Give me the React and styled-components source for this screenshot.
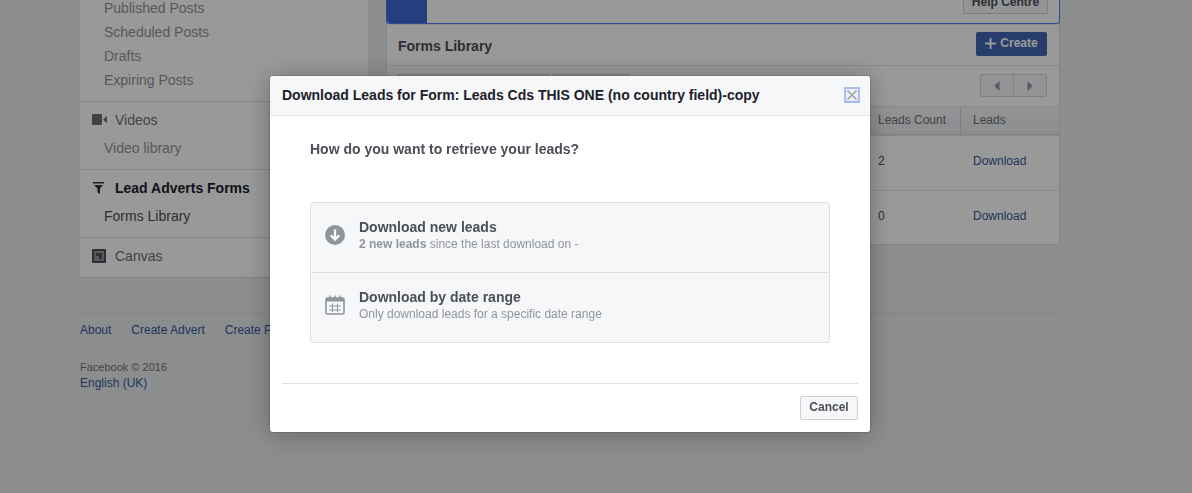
import React from "react";
import styled, { createGlobalStyle } from "styled-components";

const GlobalStyle = createGlobalStyle`
  html, body {
    margin: 0;
    height: 493px;
    overflow: hidden;
    background: #e9ebee;
    font-family: "Liberation Sans", Arial, sans-serif;
  }
  * { box-sizing: border-box; }
`;

const Page = styled.div`
  width: 980px;
  margin: -4px 0 0 80px;
`;

const Columns = styled.div`
  display: flex;
  align-items: flex-start;
  gap: 18px;
`;

const Sidebar = styled.nav`
  width: 288px;
  background: #fff;
  border-bottom: 1px solid #d3d6db;
`;

const Section = styled.div`
  padding-bottom: ${(p) => p.$pad || 9}px;
  border-bottom: ${(p) => (p.$last ? "none" : "1px solid #dddfe2")};
`;

const SectionHead = styled.div`
  display: flex;
  align-items: center;
  height: 34px;
  padding: 2px 0 0 12px;
  font-size: 14px;
  font-weight: ${(p) => (p.$active ? "bold" : "normal")};
  color: ${(p) => (p.$active ? "#1d2129" : "#6b6f76")};
  & > span { margin-left: ${(p) => p.$gap || 9}px; }
`;

const SideItem = styled.div`
  height: 24px;
  line-height: 24px;
  padding-left: 24px;
  font-size: 14px;
  color: ${(p) => (p.$active ? "#4b4f56" : "#90949c")};
`;

const Main = styled.main`
  width: 674px;
  display: flex;
  flex-direction: column;
  gap: 1px;
`;

const Banner = styled.div`
  height: 28px;
  display: flex;
  justify-content: space-between;
  background: #fff;
  border: 1px solid #5080f0;
  border-top: none;
  border-radius: 0 0 3px 3px;
`;

const BannerBlock = styled.div`
  width: 40px;
  background: #3b6ad0;
  border-radius: 0 0 0 3px;
`;

const HelpButton = styled.div`
  height: 18px;
  width: 85px;
  margin-right: 11px;
  background: #f6f7f9;
  border: 1px solid #ced0d4;
  font-size: 12px;
  font-weight: bold;
  line-height: 10px;
  text-align: center;
  color: #4b4f56;
  white-space: nowrap;
`;

const LibraryCard = styled.section`
  background: #fff;
  border: 1px solid #dddfe2;
  border-top: none;
`;

const CardHeader = styled.header`
  height: 41px;
  display: flex;
  align-items: center;
  justify-content: space-between;
  padding: 0 12px 0 11px;
  border-bottom: 1px solid #e5e5e5;
`;

const CardTitle = styled.h2`
  margin: 2px 0 0;
  font-size: 14px;
  font-weight: bold;
  color: #4b4f56;
`;

const CreateButton = styled.div`
  width: 71px;
  height: 24px;
  margin-top: -2px;
  padding-bottom: 2px;
  display: flex;
  align-items: center;
  justify-content: center;
  gap: 4px;
  background: #4267b2;
  border-radius: 2px;
  color: #fff;
  font-size: 12px;
  font-weight: bold;
`;

const Toolbar = styled.div`
  height: 40px;
  display: flex;
  align-items: flex-start;
  padding: 8px 12px 0 11px;
  gap: 3px;
`;

const GhostButton = styled.div`
  height: 24px;
  width: ${(p) => p.$w}px;
  background: #f6f7f9;
  border: 1px solid #ced0d4;
`;

const Pager = styled.div`
  margin-left: auto;
  display: flex;
  width: 67px;
  height: 23px;
  background: #f6f7f9;
  border: 1px solid #d3d6db;
  border-radius: 2px;
`;

const PagerCell = styled.div`
  flex: 1;
  display: flex;
  align-items: center;
  justify-content: center;
  & + & { border-left: 1px solid #d3d6db; }
`;

const TableRow = styled.div`
  display: grid;
  grid-template-columns: 1fr 82px 99px;
  align-items: center;
  height: ${(p) => p.$h}px;
  padding-bottom: ${(p) => p.$pad}px;
  font-size: 12px;
  color: #4b4f56;
  & + & { border-top: 1px solid #e5e6e9; }
`;

const HeadRow = styled(TableRow)`
  background: linear-gradient(#f6f7f9, #e9ebee);
  border-top: 1px solid #e5e6e9;
  border-bottom: 1px solid #d3d6db;
`;

const HeadCell = styled.div`
  height: 100%;
  display: flex;
  align-items: center;
  padding-bottom: 2px;
  color: #6b6f76;
  padding-left: ${(p) => (p.$divided ? 12 : 0)}px;
  border-left: ${(p) => (p.$divided ? "1px solid #d3d6db" : "none")};
`;

const LinkCell = styled.a`
  padding-left: 13px;
  color: #365899;
`;

const Footer = styled.footer`
  margin-top: 35px;
  border-top: 1px solid #dddfe2;
  padding-top: 9px;
`;

const FooterLinks = styled.div`
  display: flex;
  gap: 20px;
  font-size: 12px;
  line-height: 14px;
  color: #365899;
  margin-bottom: 22px;
`;

const Copyright = styled.div`
  font-size: 11px;
  line-height: 16px;
  color: #737373;
`;

const Language = styled.div`
  font-size: 12px;
  line-height: 16px;
  color: #365899;
`;

const Overlay = styled.div`
  position: fixed;
  inset: 0;
  background: rgba(0, 0, 0, 0.4);
  display: flex;
  align-items: flex-start;
  padding: 76px 0 0 270px;
`;

const Modal = styled.div`
  width: 600px;
  height: 356px;
  background: #fff;
  border-radius: 3px;
  box-shadow: 0 2px 26px rgba(0, 0, 0, 0.3), 0 0 0 1px rgba(0, 0, 0, 0.1);
  display: flex;
  flex-direction: column;
`;

const ModalHeader = styled.div`
  height: 40px;
  flex: none;
  display: flex;
  align-items: center;
  justify-content: space-between;
  padding: 0 10px 2px 12px;
  background: #f6f7f9;
  border-bottom: 1px solid #e5e5e5;
  border-radius: 3px 3px 0 0;
`;

const ModalTitle = styled.h1`
  margin: 0;
  font-size: 14px;
  font-weight: bold;
  color: #1d2129;
  white-space: nowrap;
`;

const CloseButton = styled.button`
  width: 16px;
  height: 16px;
  padding: 0;
  display: flex;
  align-items: center;
  justify-content: center;
  background: #eef0f5;
  border: 2px solid #a9bcf0;
`;

const ModalBody = styled.div`
  flex: 1;
  padding: 25px 40px 0;
`;

const Question = styled.div`
  font-size: 14px;
  font-weight: bold;
  line-height: 16px;
  color: #4b4f56;
  margin-bottom: 45px;
`;

const Options = styled.div`
  background: #f6f7f9;
  border: 1px solid #dddfe2;
  border-radius: 3px;
`;

const Option = styled.div`
  height: 69px;
  display: flex;
  align-items: center;
  padding: 0 0 5px 14px;
  gap: 14px;
  & + & {
    height: 70px;
    border-top: 1px solid #dddfe2;
  }
`;

const OptionTitle = styled.div`
  font-size: 14px;
  font-weight: bold;
  line-height: 18px;
  color: #4b4f56;
`;

const OptionSub = styled.div`
  font-size: 12px;
  line-height: 16px;
  color: #90949c;
  & > b { font-weight: bold; }
`;

const ModalFooter = styled.div`
  height: 49px;
  flex: none;
  margin: 0 12px;
  border-top: 1px solid #dddfe2;
  display: flex;
  justify-content: flex-end;
  padding-top: 12px;
`;

const CancelButton = styled.button`
  width: 58px;
  height: 24px;
  padding: 0 0 2px;
  background: #f6f7f9;
  border: 1px solid #ced0d4;
  border-radius: 2px;
  font-family: inherit;
  font-size: 12px;
  font-weight: bold;
  color: #4b4f56;
`;

const VideoIcon = () => (
  <svg width="16" height="12" viewBox="0 0 16 12">
    <rect x="0" y="0" width="10" height="11" rx="1" fill="#6b6f76" />
    <path d="M11 5.5 L15 2 V9 Z" fill="#6b6f76" />
  </svg>
);

const FunnelIcon = () => (
  <svg width="14" height="12" viewBox="0 0 14 12">
    <path d="M1 0H12V1.5H1Z M2 3H11L8 6.5V12L5.5 10.5V6.5Z" fill="#30343a" />
  </svg>
);

const CanvasIcon = () => (
  <svg width="14" height="14" viewBox="0 0 14 14">
    <path fillRule="evenodd" d="M0 1a1 1 0 0 1 1-1h12a1 1 0 0 1 1 1v12a1 1 0 0 1-1 1H1a1 1 0 0 1-1-1Z M2 2V12H12V2Z" fill="#4b4f56" />
    <rect x="2" y="2" width="10" height="10" fill="#90949c" />
    <path d="M4 4H10V10H7V7H4Z" fill="#4b4f56" />
  </svg>
);

const ArrowCircle = () => (
  <svg width="20" height="20" viewBox="0 0 20 20">
    <circle cx="10" cy="10" r="10" fill="#90949c" />
    <path d="M10 4.5V14 M5.8 10.2L10 14.6L14.2 10.2" stroke="#fff" strokeWidth="2.2" fill="none" />
  </svg>
);

const CalendarIcon = () => (
  <svg width="20" height="20" viewBox="0 0 20 20">
    <rect x="1" y="3" width="18" height="16" rx="1.5" fill="none" stroke="#90949c" strokeWidth="1.6" />
    <path d="M1 3H19V6.5H1Z" fill="#90949c" />
    <path d="M5 0.5V4 M10 0.5V4 M15 0.5V4" stroke="#90949c" strokeWidth="1.4" />
    <path d="M4 11H16 M4 15H16 M7.5 8.5V17 M12.5 8.5V17" stroke="#90949c" strokeWidth="1" />
  </svg>
);

const Triangle = ({ left }) => (
  <svg width="6" height="10" viewBox="0 0 6 10">
    <path d={left ? "M5.5 0V10L0.5 5Z" : "M0.5 0V10L5.5 5Z"} fill="#90949c" />
  </svg>
);

export default function App() {
  return (
    <>
      <GlobalStyle />
      <Page>
        <Columns>
          <Sidebar>
            <Section>
              <SideItem>Published Posts</SideItem>
              <SideItem>Scheduled Posts</SideItem>
              <SideItem>Drafts</SideItem>
              <SideItem>Expiring Posts</SideItem>
            </Section>
            <Section>
              <SectionHead $gap={7}><VideoIcon /><span>Videos</span></SectionHead>
              <SideItem>Video library</SideItem>
            </Section>
            <Section>
              <SectionHead $active><FunnelIcon /><span>Lead Adverts Forms</span></SectionHead>
              <SideItem $active>Forms Library</SideItem>
            </Section>
            <Section $last $pad={5}>
              <SectionHead><CanvasIcon /><span>Canvas</span></SectionHead>
            </Section>
          </Sidebar>
          <Main>
            <Banner>
              <BannerBlock />
              <HelpButton>Help Centre</HelpButton>
            </Banner>
            <LibraryCard>
              <CardHeader>
                <CardTitle>Forms Library</CardTitle>
                <CreateButton>
                  <svg width="11" height="11" viewBox="0 0 11 11">
                    <path d="M5.5 0V11 M0 5.5H11" stroke="#fff" strokeWidth="2" />
                  </svg>
                  Create
                </CreateButton>
              </CardHeader>
              <Toolbar>
                <GhostButton $w={152} />
                <GhostButton $w={77} />
                <Pager>
                  <PagerCell><Triangle left /></PagerCell>
                  <PagerCell><Triangle /></PagerCell>
                </Pager>
              </Toolbar>
              <HeadRow $h={29} $pad={0}>
                <HeadCell />
                <HeadCell>Leads Count</HeadCell>
                <HeadCell $divided>Leads</HeadCell>
              </HeadRow>
              <TableRow $h={55} $pad={5}>
                <div />
                <div>2</div>
                <LinkCell>Download</LinkCell>
              </TableRow>
              <TableRow $h={54} $pad={3}>
                <div />
                <div>0</div>
                <LinkCell>Download</LinkCell>
              </TableRow>
            </LibraryCard>
          </Main>
        </Columns>
        <Footer>
          <FooterLinks>
            <span>About</span>
            <span>Create Advert</span>
            <span>Create Page</span>
          </FooterLinks>
          <Copyright>Facebook © 2016</Copyright>
          <Language>English (UK)</Language>
        </Footer>
      </Page>
      <Overlay>
        <Modal>
          <ModalHeader>
            <ModalTitle>Download Leads for Form: Leads Cds THIS ONE (no country field)-copy</ModalTitle>
            <CloseButton aria-label="Close">
              <svg width="10" height="10" viewBox="0 0 10 10">
                <path d="M0.5 0.5L9.5 9.5 M9.5 0.5L0.5 9.5" stroke="#a3a7ae" strokeWidth="1.6" />
              </svg>
            </CloseButton>
          </ModalHeader>
          <ModalBody>
            <Question>How do you want to retrieve your leads?</Question>
            <Options>
              <Option>
                <ArrowCircle />
                <div>
                  <OptionTitle>Download new leads</OptionTitle>
                  <OptionSub><b>2 new leads</b> since the last download on -</OptionSub>
                </div>
              </Option>
              <Option>
                <CalendarIcon />
                <div>
                  <OptionTitle>Download by date range</OptionTitle>
                  <OptionSub>Only download leads for a specific date range</OptionSub>
                </div>
              </Option>
            </Options>
          </ModalBody>
          <ModalFooter>
            <CancelButton>Cancel</CancelButton>
          </ModalFooter>
        </Modal>
      </Overlay>
    </>
  );
}
